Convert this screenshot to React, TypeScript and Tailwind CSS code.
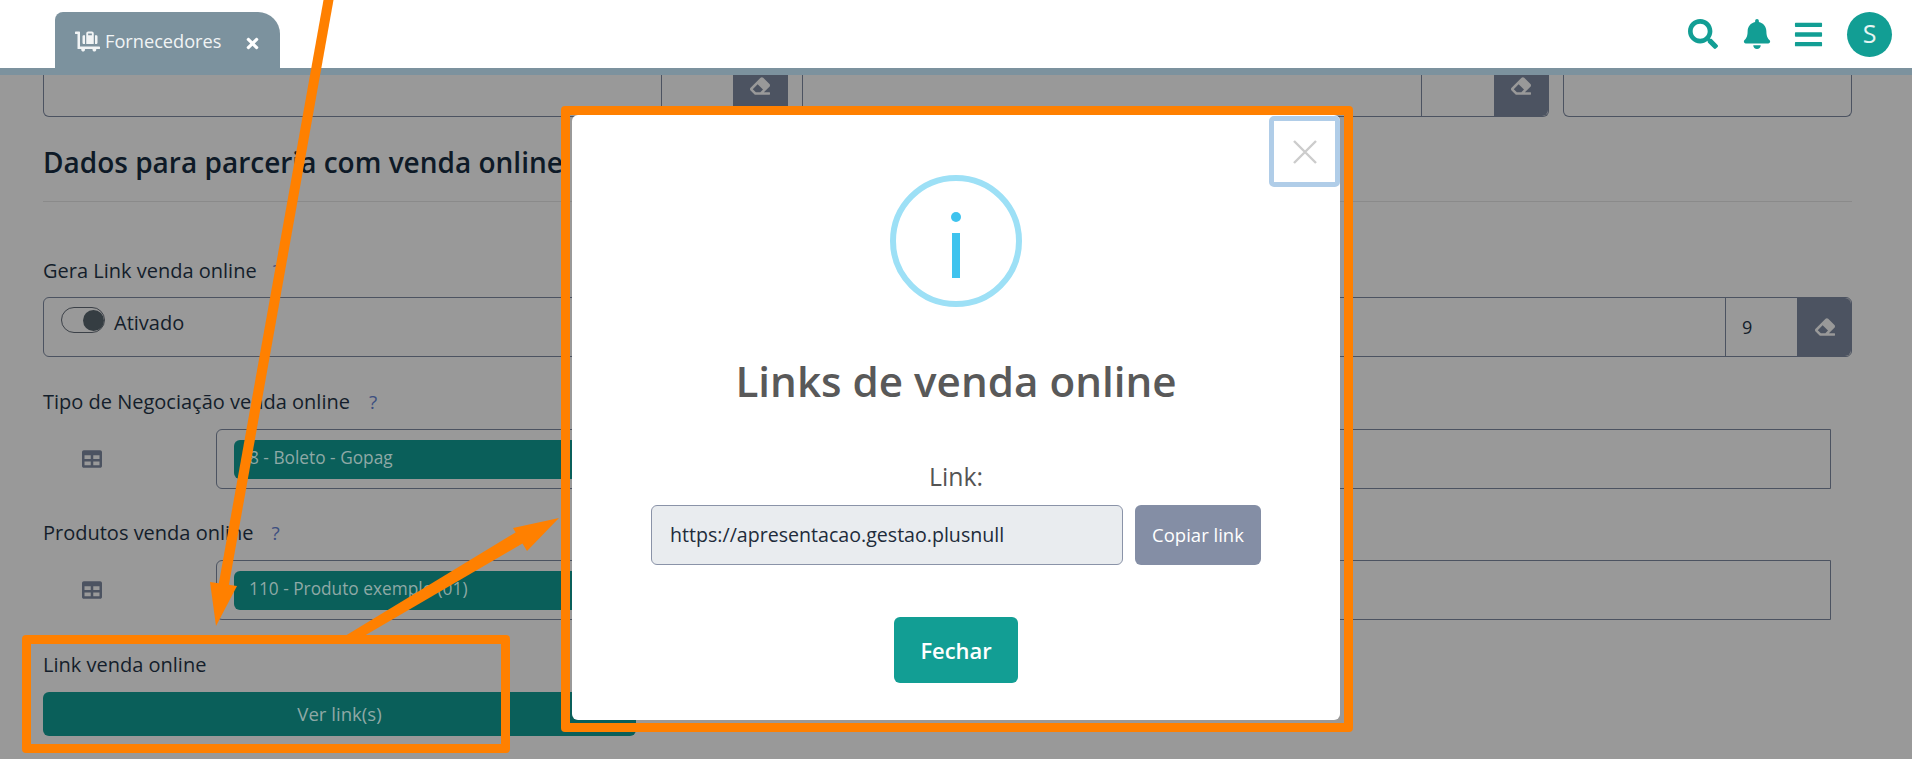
import React from "react";
import {
	FaBars,
	FaBell,
	FaEraser,
	FaLuggageCart,
	FaSearch,
	FaTable,
	FaTimes,
} from "react-icons/fa";

const EraserButton: React.FC<{ clipped?: boolean }> = ({ clipped }) => (
	<div
		className={`w-[54px] h-full flex items-center justify-center bg-[#4c5361] rounded-br-[6px] text-[#999999] ${
			clipped ? "pb-[20px]" : "rounded-tr-[6px] pl-[2px]"
		}`}
	>
		<FaEraser className="text-[20px]" />
	</div>
);

const SelectRow: React.FC<{ chip: string }> = ({ chip }) => (
	<div className="flex items-center mt-[13px] h-[60px]">
		<div className="w-[173px] pl-[39px] text-[#4c5361]">
			<FaTable className="text-[20px]" />
		</div>
		<div className="w-[1615px] h-full flex items-center pl-[17px] border border-[#4c5361] rounded-l-[6px]">
			<div className="w-[1050px] h-[39px] flex items-center pl-[15px] pb-[2px] bg-[#0a5f5a] rounded-[6px] text-[#8fa9a6] text-[17.3px]">
				{chip}
			</div>
		</div>
	</div>
);

const Label: React.FC<{ text: string; top: string; help: string }> = ({
	text,
	top,
	help,
}) => (
	<div className={`flex items-center h-[28px] text-[20px] text-[#141e2b] ${top}`}>
		<span>{text}</span>
		<span className={`text-[#3d4f80] text-[19px] ${help}`}>?</span>
	</div>
);

export default function App() {
	return (
		<div className="relative w-[1912px] h-[759px] overflow-hidden bg-[#999999] font-['Open_Sans',sans-serif]">
			{/* Top bar */}
			<header className="h-[75px] bg-white border-b-[7px] border-[#7c929e] flex justify-between">
				<div className="ml-[55px] mt-[12px] w-[225px] h-[56px] bg-[#7c929e] rounded-tl-[8px] rounded-tr-[22px] flex items-center pl-[20px] pt-[2px] text-[#f1f4f5]">
					<FaLuggageCart className="text-[25px] mr-[5px]" />
					<span className="text-[18.2px] w-[139px] mt-[1px]">Fornecedores</span>
					<FaTimes className="text-[17px] text-white mt-[4px]" />
				</div>
				<div className="flex items-center mr-[20px] text-[#129e94]">
					<FaSearch className="text-[30px] mr-[24px]" />
					<FaBell className="text-[30px] mr-[21px]" />
					<FaBars className="text-[31px] mr-[23px]" />
					<div className="w-[45px] h-[45px] rounded-full bg-[#129e94] text-[#e6f5f3] text-[25px] flex items-center justify-center">
						S
					</div>
				</div>
			</header>

			{/* Form behind the modal */}
			<main className="ml-[43px] w-[1809px]">
				<div className="flex gap-[14px] h-[42px]">
					<div className="w-[745px] flex border-x border-b border-[#4c5361] rounded-b-[6px]">
						<div className="w-[618px]" />
						<div className="w-[72px] border-l border-[#4c5361]" />
						<EraserButton clipped />
					</div>
					<div className="w-[747px] flex border-x border-b border-[#4c5361] rounded-b-[6px]">
						<div className="w-[618px]" />
						<div className="w-[73px] border-l border-[#4c5361]" />
						<EraserButton clipped />
					</div>
					<div className="w-[289px] border-x border-b border-[#4c5361] rounded-b-[6px]" />
				</div>

				<h2 className="mt-[27px] h-[36px] leading-[36px] text-[28px] font-semibold text-[#0e1a27] whitespace-nowrap">
					Dados para parceria com venda online
				</h2>
				<div className="mt-[21px] h-px bg-[#8a8a8a]" />

				<Label text="Gera Link venda online" top="mt-[55px]" help="ml-[16px]" />
				<div className="mt-[12px] h-[60px] flex border border-[#4c5361] rounded-[6px]">
					<div className="flex-1 flex items-start pl-[17px] pt-[9px]">
						<div className="w-[44px] h-[26px] rounded-full border border-[#3c4148] flex items-center justify-end">
							<div className="w-[21px] h-[21px] rounded-full bg-[#353d42]" />
						</div>
						<span className="ml-[9px] mt-[3px] text-[20px] leading-[26px] text-[#141e2b]">
							Ativado
						</span>
					</div>
					<div className="w-[72px] border-l border-[#4c5361] flex items-center pl-[16px] text-[18px] text-[#141e2b]">
						9
					</div>
					<EraserButton />
				</div>

				<Label text="Tipo de Negociação venda online" top="mt-[31px]" help="ml-[19px]" />
				<SelectRow chip="8 - Boleto - Gopag" />

				<Label text="Produtos venda online" top="mt-[30px]" help="ml-[18px]" />
				<SelectRow chip="110 - Produto exemplo (01)" />

				<div className="mt-[31px] h-[28px] flex items-center text-[20px] text-[#141e2b]">
					Link venda online
				</div>
				<div className="mt-[13px] w-[593px] h-[44px] bg-[#0a5f5a] rounded-[6px] flex items-center justify-center text-[#8fa9a6] text-[18.6px]">
					Ver link(s)
				</div>
			</main>

			{/* Modal */}
			<div className="absolute left-[572px] top-[115px] w-[768px] h-[605px] bg-white rounded-[6px] flex flex-col items-center">
				<button className="absolute top-px right-0 w-[71px] h-[71px] border-[5px] border-[#b0cde8] rounded-[5px] flex items-center justify-center">
					<svg width="26" height="26" viewBox="0 0 26 26" fill="none" stroke="#cccccc" strokeWidth="2.4">
						<path d="M2 2 L24 24 M24 2 L2 24" />
					</svg>
				</button>
				<div className="mt-[60px] w-[132px] h-[132px] rounded-full border-[6px] border-[#9de0f6] flex flex-col items-center">
					<div className="mt-[31px] w-[10px] h-[10px] rounded-full bg-[#3fc3ee]" />
					<div className="mt-[11px] w-[8px] h-[45px] bg-[#3fc3ee]" />
				</div>
				<h1 className="mt-[44px] h-[60px] leading-[60px] text-[42.2px] font-semibold text-[#595959]">
					Links de venda online
				</h1>
				<div className="mt-[49px] h-[32px] leading-[32px] text-[24.8px] text-[#545454]">
					Link:
				</div>
				<div className="mt-[13px] flex gap-[12px]">
					<div className="w-[472px] h-[60px] flex items-center pl-[18px] bg-[#e9ecef] border border-[#8a93a8] rounded-[6px] text-[19.6px] text-[#212b3a]">
						https://apresentacao.gestao.plusnull
					</div>
					<button className="w-[126px] h-[60px] bg-[#848ea5] rounded-[6px] text-white text-[18.5px]">
						Copiar link
					</button>
				</div>
				<button className="mt-[52px] w-[124px] h-[66px] pt-[2px] bg-[#129e94] rounded-[6px] text-white text-[21.9px] font-semibold">
					Fechar
				</button>
			</div>

			{/* Annotations drawn over the screenshot */}
			<div className="absolute left-[561px] top-[106px] w-[792px] h-[626px] border-[9px] border-[#ff8000] rounded-[4px]" />
			<div className="absolute left-[22px] top-[635px] w-[488px] h-[118px] border-[9px] border-[#ff8000] rounded-[4px]" />
			<svg className="absolute left-0 top-0" width="1912" height="759" fill="#ff8000" stroke="none">
				<polygon points="323.5,0 333.5,0 228,590 218,588" />
				<polygon points="210,582 237,586 216,626" />
				<polygon points="345,636 518,531 525,542 364,636" />
				<polygon points="513,528 527,551 559,518" />
			</svg>
		</div>
	);
}
